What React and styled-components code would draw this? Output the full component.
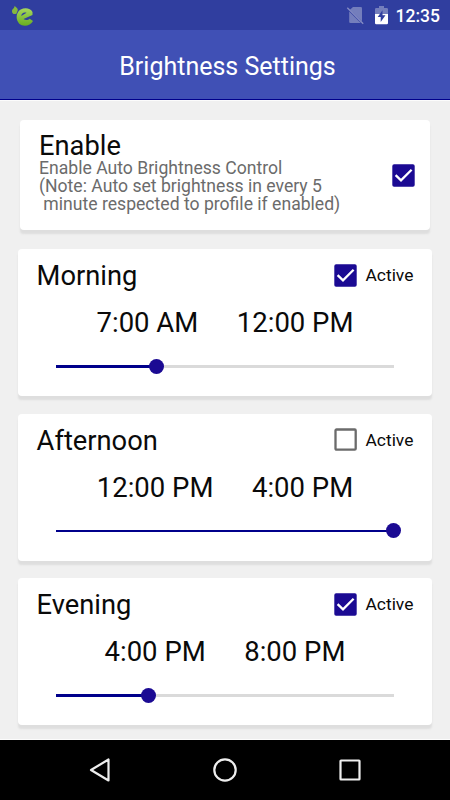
import React from 'react'
import styled, { createGlobalStyle } from 'styled-components'

const accent = '#1b0a93'

const GlobalStyle = createGlobalStyle`
  body {
    margin: 0;
    background: #f0f0f0;
    font-family: Roboto, sans-serif;
  }
  * {
    box-sizing: border-box;
  }
`
const Screen = styled.div`
  display: flex;
  flex-direction: column;
  width: 450px;
  height: 800px;
  overflow: hidden;
  background: #f0f0f0;
`
const StatusBar = styled.div`
  flex: none;
  display: flex;
  align-items: center;
  height: 30px;
  padding: 0 10px 0 11px;
  background: #303e9f;
`
const StatusIcons = styled.div`
  display: flex;
  align-items: center;
  gap: 11px;
  margin-left: auto;
`
const Clock = styled.div`
  margin-left: -3px;
  color: #fff;
  font-size: 17.5px;
  font-weight: 500;
  line-height: 30px;
  padding-top: 1px;
`
const Header = styled.header`
  flex: none;
  height: 71px;
  padding-top: 2px;
  background: #4050b5;
  border-bottom: 1px solid #fcfcfc;
  box-shadow: inset 0 -1px 0 #00008b;
  color: #fff;
  font-size: 25px;
  line-height: 69px;
  text-align: center;
  padding-left: 5px;
`
const Content = styled.main`
  flex: 1;
  min-height: 0;
  padding-top: 19.3px;
  border-bottom: 1px solid #fcfcfc;
`
const Card = styled.section`
  background: #fff;
  border-radius: 4px;
  box-shadow: 0 4px 2px -0.5px #dedede;
`
const EnableCard = styled(Card)`
  display: flex;
  align-items: center;
  justify-content: space-between;
  height: 110.2px;
  margin: 0 20px;
  padding: 0 14.7px 0 19px;
`
const EnableText = styled.div`
  align-self: flex-start;
  padding-top: 10px;
`
const Title = styled.div`
  color: #0a0a0a;
  font-size: 27.3px;
  line-height: 32px;
  white-space: nowrap;
`
const Note = styled.div`
  margin-top: -3px;
  color: #6b6b6b;
  font-size: 17.6px;
  line-height: 18px;
  white-space: pre;
`
const ProfileCard = styled(Card)`
  height: 147px;
  margin: ${(props) => props.$gap}px 17.6px 0;
  padding: 11px 19px 0 19px;
`
const ProfileHead = styled.div`
  display: flex;
  align-items: center;
  justify-content: space-between;
  height: 32px;
`
const ActiveLabel = styled.div`
  display: flex;
  align-items: center;
  gap: 8.7px;
  margin-top: -2px;
  color: #0a0a0a;
  font-size: 17.4px;
  line-height: 22px;
`
const Times = styled.div`
  display: flex;
  justify-content: center;
  gap: 38.5px;
  height: 32px;
  margin-top: 15px;
  color: #0a0a0a;
  font-size: 27.5px;
  line-height: 32px;
`
const Track = styled.div`
  position: relative;
  height: 2.4px;
  margin: 25.7px 19.5px 0;
  background: #dadada;
`
const Fill = styled.div`
  height: 100%;
  background: #00008b;
`
const Thumb = styled.div`
  position: absolute;
  top: -6.3px;
  width: 15px;
  height: 15px;
  margin-left: -7.5px;
  border-radius: 50%;
  background: ${accent};
`
const NavBar = styled.nav`
  flex: none;
  display: flex;
  justify-content: space-between;
  align-items: center;
  height: 60px;
  padding: 0 87px;
  background: #000;
`

const profiles = [
  { name: 'Morning', from: '7:00 AM', to: '12:00 PM', active: true, level: 29.7 },
  { name: 'Afternoon', from: '12:00 PM', to: '4:00 PM', active: false, level: 100 },
  { name: 'Evening', from: '4:00 PM', to: '8:00 PM', active: true, level: 27.4 },
]

const Checkbox = ({ checked }) => (
  <svg width="23" height="23" viewBox="0 0 23 23">
    {checked ? (
      <>
        <rect x="0.3" y="0.3" width="22.4" height="22.4" rx="1.8" fill={accent} />
        <path d="M3.6 11.2 9 16.4 19.6 5.8" fill="none" stroke="#fff" strokeWidth="2.3" />
      </>
    ) : (
      <rect
        x="1.5"
        y="1.5"
        width="20.2"
        height="20.2"
        rx="1"
        fill="none"
        stroke="#6b6b6b"
        strokeWidth="2.3"
      />
    )}
  </svg>
)

const LeafIcon = () => (
  <svg width="24" height="24" viewBox="0 0 24 24">
    <defs>
      <linearGradient id="leaf" x1="0" y1="0" x2="0" y2="1">
        <stop offset="0" stopColor="#a6d75d" />
        <stop offset="1" stopColor="#68ae20" />
      </linearGradient>
    </defs>
    <path
      d="M3.6 2.8C4.6 4.3 7.1 5 6.8 7.2L5.400 10.800C2.800 11.700.8 10.500 1 8 1.100 5.900 3.800 5.300 3.600 2.800Z"
      fill="#85b83e"
    />
    <path
      d="M21.500 9C19.500 5.200 14 4.300 9.700 6.600 5 9.200 4.200 16.500 8.200 20.700c3.800 3.400 11.400 2.400 13.800-2.700l-3.300-2.300c-1.600 1.700-4.300 1.700-6.200.4L21.500 12Z"
      fill="url(#leaf)"
    />
    <path d="M10.300 12.900c.1-2.800 2.700-4.200 5.200-3.200Z" fill="#303e9f" />
  </svg>
)

const NoSimIcon = () => (
  <svg width="18" height="20" viewBox="0 0 18 20">
    <path d="M7 2h7.700q1.300 0 1.300 1.300V16.500L3.900 4.800Z" fill="#747ebc" />
    <path d="M3.200 6.500 14.800 18H4.500q-1.300 0-1.300-1.300Z" fill="#747ebc" />
    <path d="M1.300 2.800 17.200 18.700" stroke="#858dc4" strokeWidth="1.3" />
  </svg>
)

const BatteryIcon = () => (
  <svg width="13" height="19" viewBox="0 0 13 19">
    <path d="M4 0h5v2h2.700q1.300 0 1.300 1.200V8H0V3.200Q0 2 1.300 2H4Z" fill="#747ebc" />
    <path d="M0 8h13v9q0 1.200-1.200 1.200H1.200Q0 18.200 0 17Z" fill="#fff" />
    <path d="M7.500 4.300 2.700 11h3v5L10.500 9.200h-3Z" fill="#303e9f" />
  </svg>
)

const Profile = ({ profile, gap }) => (
  <ProfileCard $gap={gap}>
    <ProfileHead>
      <Title>{profile.name}</Title>
      <ActiveLabel>
        <Checkbox checked={profile.active} />
        Active
      </ActiveLabel>
    </ProfileHead>
    <Times>
      <span>{profile.from}</span>
      <span>{profile.to}</span>
    </Times>
    <Track>
      <Fill style={{ width: `${profile.level}%` }} />
      <Thumb style={{ left: `${profile.level}%` }} />
    </Track>
  </ProfileCard>
)

const App = () => (
  <>
    <GlobalStyle />
    <Screen>
      <StatusBar>
        <LeafIcon />
        <StatusIcons>
          <NoSimIcon />
          <BatteryIcon />
          <Clock>12:35</Clock>
        </StatusIcons>
      </StatusBar>
      <Header>Brightness Settings</Header>
      <Content>
        <EnableCard>
          <EnableText>
            <Title>Enable</Title>
            <Note>
              {'Enable Auto Brightness Control\n(Note: Auto set brightness in every 5\n minute respected to profile if enabled)'}
            </Note>
          </EnableText>
          <Checkbox checked />
        </EnableCard>
        {profiles.map((p, i) => (
          <Profile key={p.name} profile={p} gap={i === 0 ? 19 : 17.5} />
        ))}
      </Content>
      <NavBar>
        <svg width="26" height="26" viewBox="0 0 26 26">
          <path
            d="M21.5 2.5v21L4 13Z"
            fill="none"
            stroke="#eee"
            strokeWidth="2.2"
            strokeLinejoin="round"
          />
        </svg>
        <svg width="26" height="26" viewBox="0 0 26 26">
          <circle cx="13" cy="13" r="10.7" fill="none" stroke="#eee" strokeWidth="2.2" />
        </svg>
        <svg width="26" height="26" viewBox="0 0 26 26">
          <rect x="3.5" y="3.5" width="19" height="19" rx="0.5" fill="none" stroke="#eee" strokeWidth="2.2" />
        </svg>
      </NavBar>
    </Screen>
  </>
)

export default App
